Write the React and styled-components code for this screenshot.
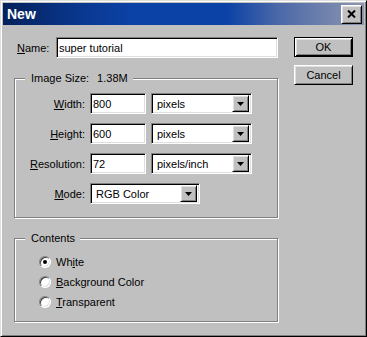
import React from 'react';
import styled, { createGlobalStyle, css } from 'styled-components';

const Global = createGlobalStyle`
  html, body { margin: 0; padding: 0; background: #c0c0c0; }
  body {
    font-family: "Liberation Sans", Arial, sans-serif;
    font-size: 11px;
    color: #000;
  }
`;

const raised = css`
  background: #c0c0c0;
  border: 1px solid;
  border-color: #fff #000 #000 #fff;
  box-shadow: inset 1px 1px #dfdfdf, inset -1px -1px #808080;
`;

const sunken = css`
  background: #fff;
  border: 1px solid;
  border-color: #808080 #fff #fff #808080;
  box-shadow: inset 1px 1px #000, inset -1px -1px #dfdfdf;
`;

const Window = styled.div`
  width: 367px;
  height: 337px;
  box-sizing: border-box;
  background: #c0c0c0;
  border: 1px solid;
  border-color: #dfdfdf #000 #000 #dfdfdf;
  box-shadow: inset 1px 1px #fff, inset -1px -1px #808080;
  padding: 2px;
  display: flex;
  flex-direction: column;
`;

const TitleBar = styled.div`
  height: 22px;
  flex: none;
  display: flex;
  align-items: center;
  justify-content: space-between;
  padding: 0 2px 0 4px;
  background: linear-gradient(
    to right,
    #04215a 0%,
    #0a3890 22%,
    #0b42a6 36%,
    #0b42a6 62%,
    #4a68a8 76%,
    #8c96b0 100%
  );
`;

const Title = styled.span`
  color: #fff;
  font-weight: bold;
  font-size: 14px;
  line-height: 22px;
`;

const CloseButton = styled.div`
  ${raised};
  box-sizing: border-box;
  width: 21px;
  height: 19px;
  display: flex;
  align-items: center;
  justify-content: center;
`;

const Body = styled.div`
  flex: 1;
  display: flex;
  gap: 16px;
  padding: 12px 11px 0 11px;
`;

const LeftCol = styled.div`
  width: 264px;
  flex: none;
  display: flex;
  flex-direction: column;
`;

const RightCol = styled.div`
  width: 59px;
  flex: none;
  display: flex;
  flex-direction: column;
  gap: 8px;
`;

const NameRow = styled.div`
  height: 21px;
  display: flex;
  align-items: center;
  justify-content: space-between;
  padding-left: 3px;
`;

const Label = styled.span`
  white-space: nowrap;
  ${p => p.$w && css`
    width: ${p.$w}px;
    text-align: right;
  `}
`;

const TextBox = styled.div`
  ${sunken};
  box-sizing: border-box;
  width: ${p => p.$w}px;
  height: 21px;
  padding: 0 2px;
  display: flex;
  align-items: center;
  white-space: nowrap;
`;

const Group = styled.div`
  position: relative;
  box-sizing: border-box;
  height: ${p => p.$h}px;
  margin-top: 20px;
  border: 1px solid #808080;
  box-shadow: inset 1px 1px #fff, 1px 1px #fff;
  padding: ${p => p.$pad};
  display: flex;
  flex-direction: column;
  gap: ${p => p.$gap}px;
`;

const Legend = styled.div`
  position: absolute;
  top: -7px;
  left: 10px;
  padding: 0 5px 0 6px;
  background: #c0c0c0;
  line-height: 13px;
  white-space: nowrap;
`;

const LegendValue = styled.span`
  margin-left: 8px;
`;

const FieldRow = styled.div`
  height: 21px;
  display: flex;
  align-items: center;
  gap: 5px;
`;

const Select = styled.div`
  ${sunken};
  box-sizing: border-box;
  width: ${p => p.$w}px;
  height: 21px;
  display: flex;
  align-items: center;
  padding: 2px 2px 2px 5px;
  white-space: nowrap;
`;

const SelectText = styled.span`
  flex: 1;
`;

const DropButton = styled.div`
  ${raised};
  box-sizing: border-box;
  width: 17px;
  height: 17px;
  flex: none;
  display: flex;
  align-items: center;
  justify-content: center;
`;

const RadioRow = styled.div`
  height: 20px;
  display: flex;
  align-items: center;
  gap: 5px;
`;

const RadioCircle = styled.div`
  box-sizing: border-box;
  width: 12px;
  height: 12px;
  border-radius: 50%;
  background: #fff;
  border: 1px solid;
  border-color: #808080 #fff #fff #808080;
  box-shadow: inset 1px 1px #404040, inset -1px -1px #dfdfdf;
  display: flex;
  align-items: center;
  justify-content: center;
`;

const RadioDot = styled.div`
  width: 4px;
  height: 4px;
  border-radius: 50%;
  background: #000;
`;

const PushButton = styled.div`
  ${raised};
  box-sizing: border-box;
  width: 59px;
  height: 20px;
  display: flex;
  align-items: center;
  justify-content: center;
  ${p => p.$default && css`
    border: 1px solid #000;
    box-shadow: inset 1px 1px #fff, inset -1px -1px #000,
      inset 2px 2px #dfdfdf, inset -2px -2px #808080;
  `}
`;

const Arrow = () => (
  <svg width="7" height="4" viewBox="0 0 7 4">
    <path d="M0 0h7L3.5 4z" fill="#000" />
  </svg>
);

const CloseX = () => (
  <svg width="9" height="8" viewBox="0 0 9 8">
    <path d="M1 0.5L8 7.5M8 0.5L1 7.5" stroke="#000" strokeWidth="2" />
  </svg>
);

const Dropdown = ({ w, children }) => (
  <Select $w={w}>
    <SelectText>{children}</SelectText>
    <DropButton><Arrow /></DropButton>
  </Select>
);

const Radio = ({ checked, children }) => (
  <RadioRow>
    <RadioCircle>{checked && <RadioDot />}</RadioCircle>
    <span>{children}</span>
  </RadioRow>
);

export default function App() {
  return (
    <>
      <Global />
      <Window>
        <TitleBar>
          <Title>New</Title>
          <CloseButton><CloseX /></CloseButton>
        </TitleBar>
        <Body>
          <LeftCol>
            <NameRow>
              <Label><u>N</u>ame:</Label>
              <TextBox $w={222}>super tutorial</TextBox>
            </NameRow>
            <Group $h={140} $pad="14px 0 13px 0" $gap={9}>
              <Legend>Image Size:<LegendValue>1.38M</LegendValue></Legend>
              <FieldRow>
                <Label $w={70}><u>W</u>idth:</Label>
                <TextBox $w={56}>800</TextBox>
                <Dropdown w={101}>pixels</Dropdown>
              </FieldRow>
              <FieldRow>
                <Label $w={70}><u>H</u>eight:</Label>
                <TextBox $w={56}>600</TextBox>
                <Dropdown w={101}>pixels</Dropdown>
              </FieldRow>
              <FieldRow>
                <Label $w={70}><u>R</u>esolution:</Label>
                <TextBox $w={56}>72</TextBox>
                <Dropdown w={101}>pixels/inch</Dropdown>
              </FieldRow>
              <FieldRow>
                <Label $w={70}><u>M</u>ode:</Label>
                <Dropdown w={110}>RGB Color</Dropdown>
              </FieldRow>
            </Group>
            <Group $h={84} $pad="13px 0 9px 24px" $gap={0}>
              <Legend>Contents</Legend>
              <Radio checked>Wh<u>i</u>te</Radio>
              <Radio><u>B</u>ackground Color</Radio>
              <Radio><u>T</u>ransparent</Radio>
            </Group>
          </LeftCol>
          <RightCol>
            <PushButton $default>OK</PushButton>
            <PushButton>Cancel</PushButton>
          </RightCol>
        </Body>
      </Window>
    </>
  );
}
